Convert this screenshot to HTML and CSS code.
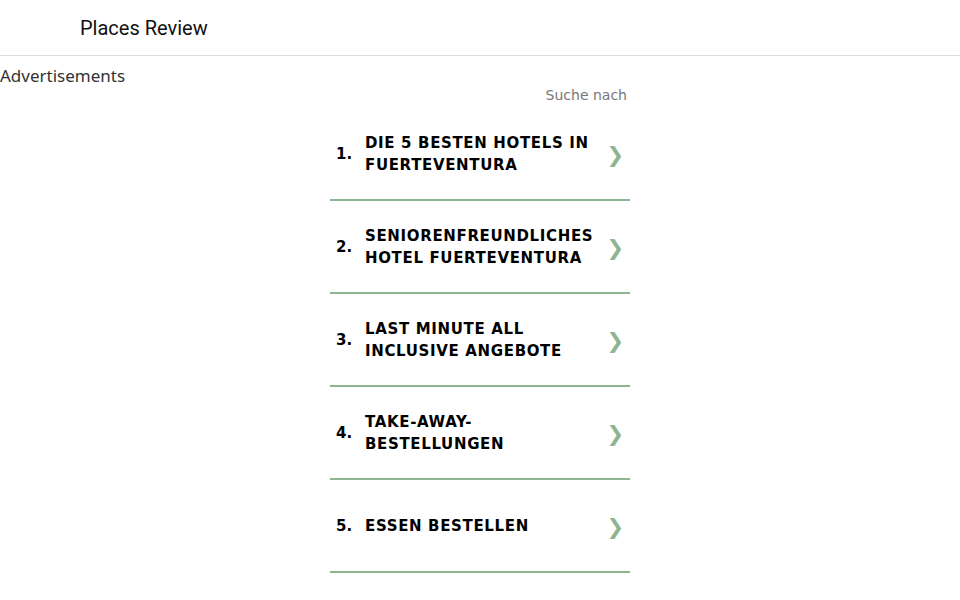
FILE: index.html
```html
<!DOCTYPE html>
<html lang="de">
<head>
<meta charset="utf-8">
<title>Places Review</title>
<link rel="stylesheet" href="styles.css">
</head>
<body>
<header class="topbar">
  <div class="brand">Places Review</div>
</header>
<div class="ads-label">Advertisements</div>
<main class="search">
  <div class="search-head">Suche nach</div>
  <ul class="results">
    <li class="item"><span class="num">1.</span><span class="label">DIE 5 BESTEN HOTELS IN FUERTEVENTURA</span><span class="chev">&#10095;</span></li>
    <li class="item"><span class="num">2.</span><span class="label">SENIORENFREUNDLICHES HOTEL FUERTEVENTURA</span><span class="chev">&#10095;</span></li>
    <li class="item"><span class="num">3.</span><span class="label">LAST MINUTE ALL INCLUSIVE ANGEBOTE</span><span class="chev">&#10095;</span></li>
    <li class="item"><span class="num">4.</span><span class="label">TAKE-AWAY-BESTELLUNGEN</span><span class="chev">&#10095;</span></li>
    <li class="item"><span class="num">5.</span><span class="label">ESSEN BESTELLEN</span><span class="chev">&#10095;</span></li>
  </ul>
</main>
</body>
</html>
```
FILE: styles.css
```css
html, body {
  margin: 0;
  padding: 0;
  background: #fff;
}
body {
  font-family: "DejaVu Sans", sans-serif;
}
.topbar {
  height: 55px;
  border-bottom: 1px solid #dcdcdc;
  display: flex;
  align-items: center;
  padding-left: 80px;
}
.brand {
  font-family: Roboto, "Liberation Sans", sans-serif;
  font-size: 20px;
  color: #111;
}
.ads-label {
  font-family: "Noto Sans", "Open Sans", sans-serif;
  font-size: 17px;
  color: #333;
  margin-top: 8px;
  line-height: 24px;
}
.search {
  width: 300px;
  margin: 0 auto;
}
.search-head {
  text-align: right;
  font-size: 14px;
  color: #777;
  padding-right: 3px;
  line-height: 18px;
  margin-top: -2px;
}
.results {
  list-style: none;
  margin: 4px 0 0;
  padding: 0;
}
.item {
  height: 91px;
  border-bottom: 2px solid #8db592;
  display: flex;
  align-items: center;
  padding: 0 6px;
}
.num {
  width: 29px;
  flex: none;
  font-size: 15px;
  font-weight: bold;
  color: #000;
}
.label {
  flex: 1;
  font-size: 15px;
  font-weight: bold;
  line-height: 22px;
  color: #000;
  letter-spacing: 0.65px;
}
.chev {
  flex: none;
  color: #8db592;
  font-size: 21px;
  margin-left: 4px;
  padding-top: 2px;
}
```
